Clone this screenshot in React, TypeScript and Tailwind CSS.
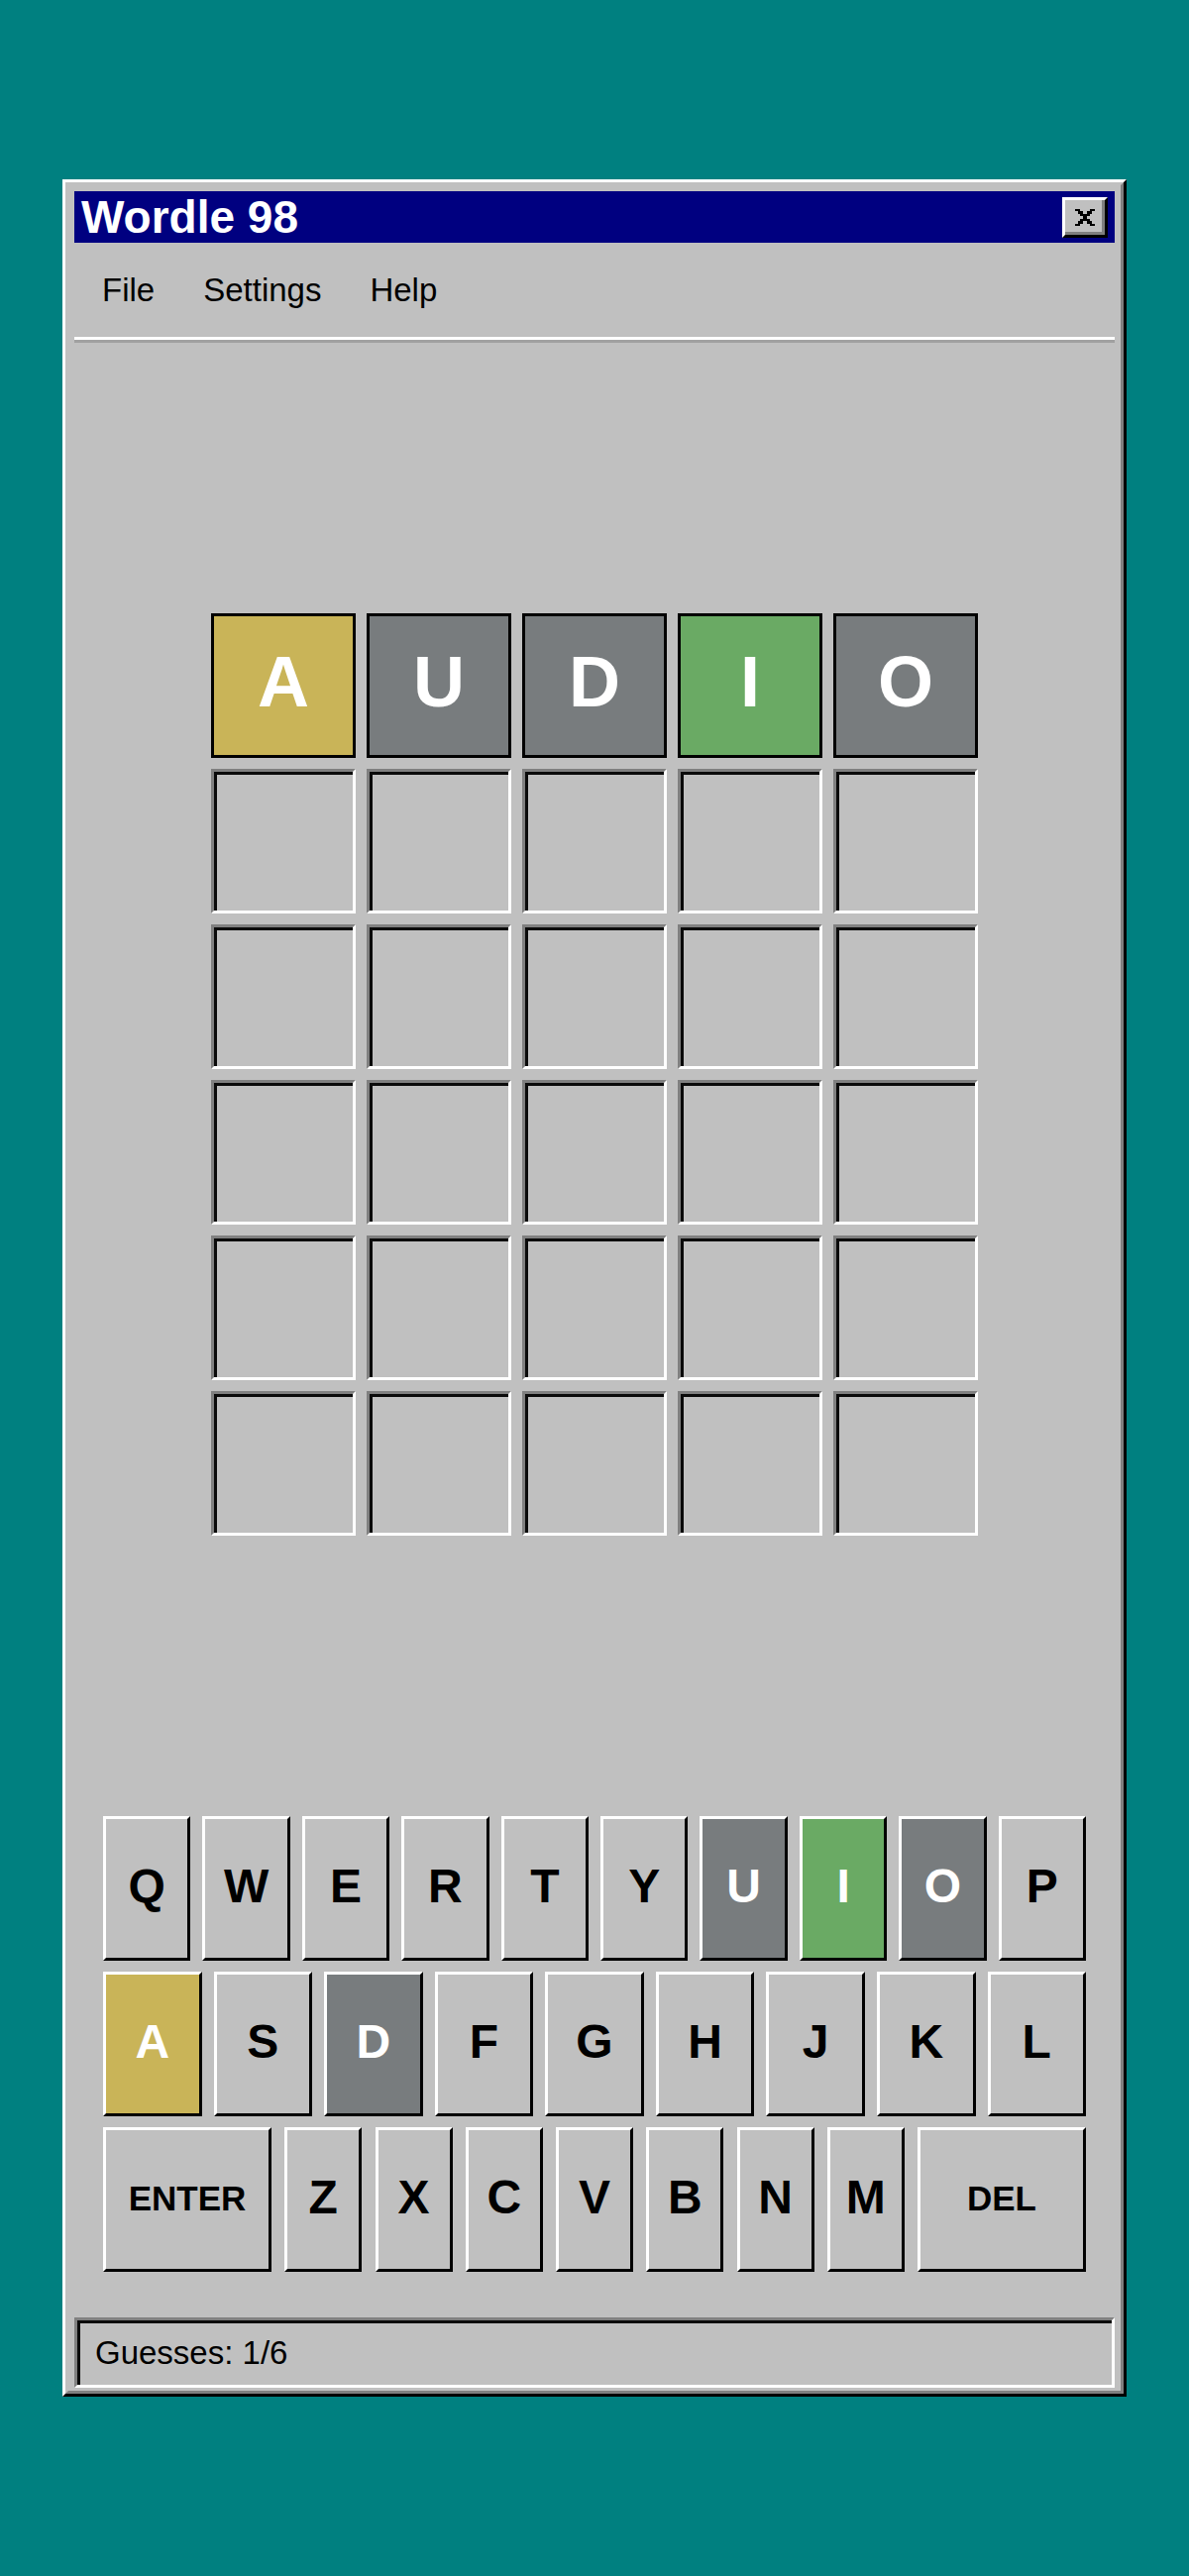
import React from 'react';

type Status = 'correct' | 'present' | 'absent' | 'empty';

const FONT = { fontFamily: '"Liberation Sans", Arial, sans-serif' };

const tileColors: Record<Status, string> = {
  correct: 'bg-[#6aaa64]',
  present: 'bg-[#c9b458]',
  absent: 'bg-[#787c7e]',
  empty: 'bg-[#c0c0c0]',
};

const guesses: { letter: string; status: Status }[][] = [
  [
    { letter: 'A', status: 'present' },
    { letter: 'U', status: 'absent' },
    { letter: 'D', status: 'absent' },
    { letter: 'I', status: 'correct' },
    { letter: 'O', status: 'absent' },
  ],
];

const keyStatus: Record<string, Status> = {
  A: 'present',
  U: 'absent',
  D: 'absent',
  O: 'absent',
  I: 'correct',
};

const rows = [
  ['Q', 'W', 'E', 'R', 'T', 'Y', 'U', 'I', 'O', 'P'],
  ['A', 'S', 'D', 'F', 'G', 'H', 'J', 'K', 'L'],
  ['ENTER', 'Z', 'X', 'C', 'V', 'B', 'N', 'M', 'DEL'],
];

const Tile: React.FC<{ letter?: string; status: Status }> = ({ letter, status }) => {
  if (status === 'empty') {
    // sunken cell
    return (
      <div className="w-[146px] h-[146px] bg-[#c0c0c0] border-[3px] border-t-[#808080] border-l-[#808080] border-b-white border-r-white shadow-[inset_3px_3px_0_#0a0a0a]" />
    );
  }
  return (
    <div
      className={`w-[146px] h-[146px] flex items-center justify-center border-[3px] border-black ${tileColors[status]}`}
    >
      <span className="text-white font-bold text-[72px] leading-none -mt-[8px]" style={FONT}>
        {letter}
      </span>
    </div>
  );
};

const Key: React.FC<{ label: string }> = ({ label }) => {
  const status = keyStatus[label];
  const wide = label === 'ENTER' || label === 'DEL';
  const row3 = rows[2].includes(label);
  const width = wide ? 'w-[170px]' : row3 ? 'w-[78px]' : 'flex-1';
  const bg = status ? tileColors[status] : 'bg-[#c0c0c0]';
  const fg = status ? 'text-white' : 'text-black';
  const size = wide ? 'text-[35px]' : 'text-[48px]';
  return (
    <button
      type="button"
      className={`${width} h-[146px] shrink-0 flex items-center justify-center border-[3px] border-t-white border-l-white border-r-black border-b-black ${bg} ${fg}`}
    >
      <span className={`font-bold leading-none ${size} -mt-[4px]`} style={FONT}>
        {label}
      </span>
    </button>
  );
};

export default function App() {
  const board = Array.from({ length: 6 }, (_, r) =>
    Array.from({ length: 5 }, (_, c) => guesses[r]?.[c] ?? { letter: '', status: 'empty' as Status })
  );

  return (
    <div className="w-full h-[2600px] bg-[#008080] flex items-center justify-center" style={FONT}>
      {/* window frame */}
      <div className="w-[1074px] h-[2238px] bg-[#c0c0c0] border-[3px] border-t-white border-l-white border-r-black border-b-black">
        <div className="h-full flex flex-col border-[3px] border-t-[#c0c0c0] border-l-[#c0c0c0] border-r-[#808080] border-b-[#808080] px-[6px] pt-[6px] pb-[3px]">
          {/* title bar */}
          <div className="h-[52px] bg-[#000080] flex items-center justify-between pl-[7px] pr-[7px]">
            <span className="text-white font-bold text-[46px] leading-none">Wordle 98</span>
            <button
              type="button"
              aria-label="Close"
              className="w-[46px] h-[41px] bg-[#c0c0c0] flex items-center justify-center border-[3px] border-t-white border-l-white border-r-black border-b-black shadow-[inset_-3px_-3px_0_#808080]"
            >
              <svg width="20" height="17" viewBox="0 0 8 7" shapeRendering="crispEdges">
                <path
                  d="M0 0h2v1h1v1h2V1h1V0h2v1H7v1H6v1H5v1h1v1h1v1h1v1H6V6H5V5H3v1H2v1H0V6h1V5h1V4h1V3H2V2H1V1H0z"
                  fill="#000"
                />
              </svg>
            </button>
          </div>

          {/* menu bar */}
          <div className="h-[98px] flex items-center gap-[49px] pl-[28px] border-b-[3px] border-b-white">
            <span className="text-[33px] text-black leading-none">File</span>
            <span className="text-[33px] text-black leading-none">Settings</span>
            <span className="text-[33px] text-black leading-none">Help</span>
          </div>
          <div className="h-[3px] bg-[#a0a0a0]" />

          {/* board */}
          <div className="flex-1 flex items-center justify-center pb-[10px]">
            <div className="flex flex-col gap-[11px]">
              {board.map((row, r) => (
                <div key={r} className="flex gap-[11px]">
                  {row.map((t, c) => (
                    <Tile key={c} letter={t.letter} status={t.status} />
                  ))}
                </div>
              ))}
            </div>
          </div>

          {/* keyboard */}
          <div className="flex flex-col gap-[11px] px-[29px]">
            <div className="flex gap-[12px]">
              {rows[0].map((k) => (
                <Key key={k} label={k} />
              ))}
            </div>
            <div className="flex gap-[12px]">
              {rows[1].map((k) => (
                <Key key={k} label={k} />
              ))}
            </div>
            <div className="flex gap-[13px] justify-between">
              {rows[2].map((k) => (
                <Key key={k} label={k} />
              ))}
            </div>
          </div>

          {/* status bar */}
          <div className="mt-[46px] h-[71px] flex items-center pl-[18px] border-[3px] border-t-[#808080] border-l-[#808080] border-b-white border-r-white shadow-[inset_3px_3px_0_#0a0a0a]">
            <span className="text-[33px] text-black leading-none">Guesses: 1/6</span>
          </div>
        </div>
      </div>
    </div>
  );
}
